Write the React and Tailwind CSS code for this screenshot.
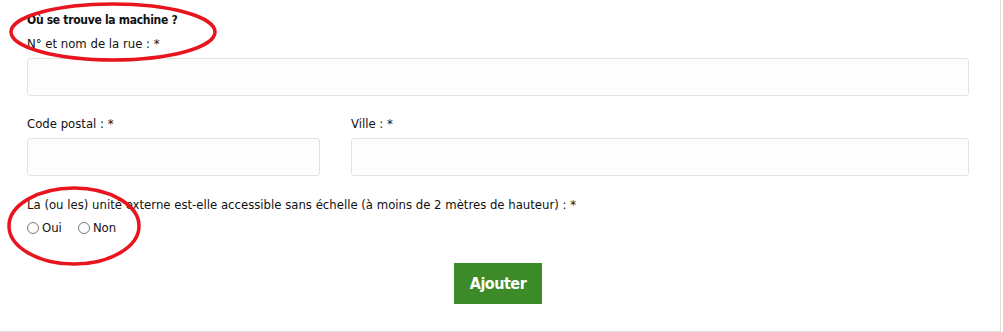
export default function App() {
  const font = { fontFamily: '"DejaVu Sans Condensed", "DejaVu Sans", sans-serif' };
  return (
    <div className="relative w-[1001px] h-[332px] bg-white border-r border-b border-[#dddddd] text-[13px] text-[#111]" style={font}>
      <div className="pl-[27px] pr-[31px] pt-[12px] flex flex-col">
        <div className="font-bold text-[12px] tracking-[-0.3px] leading-[16px]">Où se trouve la machine ?</div>
        <label className="mt-[8px] leading-[16px]">N° et nom de la rue : *</label>
        <div className="mt-[6px] h-[38px] rounded-[3px] border border-[#e2e2e2] bg-[#fdfdfd]" />
        <div className="mt-[20px] flex gap-[31px]">
          <div className="w-[293px] flex flex-col">
            <label className="leading-[16px]">Code postal : *</label>
            <div className="mt-[6px] h-[38px] rounded-[3px] border border-[#e2e2e2] bg-[#fdfdfd]" />
          </div>
          <div className="flex-1 flex flex-col">
            <label className="leading-[16px]">Ville : *</label>
            <div className="mt-[6px] h-[38px] rounded-[3px] border border-[#e2e2e2] bg-[#fdfdfd]" />
          </div>
        </div>
        <div className="mt-[21px] leading-[16px]">La (ou les) unité externe est-elle accessible sans échelle (à moins de 2 mètres de hauteur) : *</div>
        <div className="mt-[7px] flex items-center leading-[16px]">
          <span className="w-[12px] h-[12px] rounded-full border border-[#777] bg-white" />
          <span className="ml-[3px]">Oui</span>
          <span className="ml-[16px] w-[12px] h-[12px] rounded-full border border-[#777] bg-white" />
          <span className="ml-[3px]">Non</span>
        </div>
        <div className="mt-[27px] flex justify-center">
          <button className="w-[88px] h-[41px] bg-[#3d8b28] text-white text-[16px] font-semibold tracking-[-0.5px]">Ajouter</button>
        </div>
      </div>
      <svg className="absolute left-0 top-0 pointer-events-none" width="1003" height="332">
        <ellipse cx="113" cy="32" rx="102" ry="28" fill="none" stroke="#e8141e" strokeWidth="3.5" />
        <ellipse cx="74" cy="226" rx="65" ry="38" fill="none" stroke="#e8141e" strokeWidth="3.5" />
      </svg>
    </div>
  );
}
